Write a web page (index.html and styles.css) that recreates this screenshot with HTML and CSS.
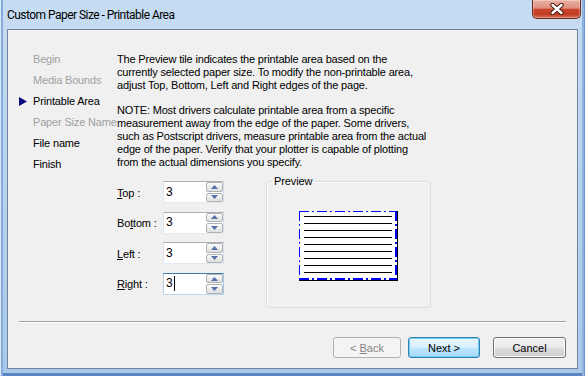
FILE: index.html
```html
<!DOCTYPE html>
<html lang="en">
<head>
<meta charset="utf-8">
<title>Custom Paper Size - Printable Area</title>
<link rel="stylesheet" href="styles.css">
</head>
<body>
<div class="window">
  <header class="titlebar">
    <span class="title">Custom Paper Size - Printable Area</span>
    <button class="close" aria-label="Close">
      <svg width="14" height="12" viewBox="0 0 14 12">
        <path d="M2.5 2 L11.5 10 M11.5 2 L2.5 10" stroke="#4a1a12" stroke-width="4.4" stroke-linecap="round"/>
        <path d="M2.5 2 L11.5 10 M11.5 2 L2.5 10" stroke="#ffffff" stroke-width="2.4" stroke-linecap="round"/>
      </svg>
    </button>
  </header>
  <main class="client">
    <div class="wizard">
      <ul class="steps">
        <li class="step disabled"><span class="marker"></span>Begin</li>
        <li class="step disabled"><span class="marker"></span>Media Bounds</li>
        <li class="step current"><span class="marker"><svg width="8" height="9" viewBox="0 0 8 9"><polygon points="0,0 8,4.5 0,9" fill="#0a0a80"/></svg></span>Printable Area</li>
        <li class="step disabled"><span class="marker"></span>Paper Size Name</li>
        <li class="step"><span class="marker"></span>File name</li>
        <li class="step"><span class="marker"></span>Finish</li>
      </ul>
      <section class="page">
        <p>The Preview tile indicates the printable area based on the<br>currently selected paper size. To modify the non-printable area,<br>adjust Top, Bottom, Left and Right edges of the page.</p>
        <p>NOTE: Most drivers calculate printable area from a specific<br>measurement away from the edge of the paper. Some drivers,<br>such as Postscript drivers, measure printable area from the actual<br>edge of the paper. Verify that your plotter is capable of plotting<br>from the actual dimensions you specify.</p>
        <div class="edit-area">
          <div class="fields">
            <div class="field-row">
              <label class="field-label"><u>T</u>op :</label>
              <div class="spin">
                <span class="spin-value">3</span>
                <span class="spin-buttons">
                  <span class="spin-btn"><svg width="7" height="4" viewBox="0 0 7 4"><polygon points="0,4 7,4 3.5,0" fill="#5470a8"/></svg></span>
                  <span class="spin-btn"><svg width="7" height="4" viewBox="0 0 7 4"><polygon points="0,0 7,0 3.5,4" fill="#5470a8"/></svg></span>
                </span>
              </div>
            </div>
            <div class="field-row">
              <label class="field-label">Bo<u>t</u>tom :</label>
              <div class="spin">
                <span class="spin-value">3</span>
                <span class="spin-buttons">
                  <span class="spin-btn"><svg width="7" height="4" viewBox="0 0 7 4"><polygon points="0,4 7,4 3.5,0" fill="#5470a8"/></svg></span>
                  <span class="spin-btn"><svg width="7" height="4" viewBox="0 0 7 4"><polygon points="0,0 7,0 3.5,4" fill="#5470a8"/></svg></span>
                </span>
              </div>
            </div>
            <div class="field-row">
              <label class="field-label"><u>L</u>eft :</label>
              <div class="spin">
                <span class="spin-value">3</span>
                <span class="spin-buttons">
                  <span class="spin-btn"><svg width="7" height="4" viewBox="0 0 7 4"><polygon points="0,4 7,4 3.5,0" fill="#5470a8"/></svg></span>
                  <span class="spin-btn"><svg width="7" height="4" viewBox="0 0 7 4"><polygon points="0,0 7,0 3.5,4" fill="#5470a8"/></svg></span>
                </span>
              </div>
            </div>
            <div class="field-row">
              <label class="field-label"><u>R</u>ight :</label>
              <div class="spin focus">
                <span class="spin-value">3<span class="caret"></span></span>
                <span class="spin-buttons">
                  <span class="spin-btn"><svg width="7" height="4" viewBox="0 0 7 4"><polygon points="0,4 7,4 3.5,0" fill="#5470a8"/></svg></span>
                  <span class="spin-btn"><svg width="7" height="4" viewBox="0 0 7 4"><polygon points="0,0 7,0 3.5,4" fill="#5470a8"/></svg></span>
                </span>
              </div>
            </div>
          </div>
          <fieldset class="preview">
            <legend>Preview</legend>
            <div class="preview-body">
              <svg class="paper" width="100" height="71" viewBox="0 0 100 71" shape-rendering="crispEdges">
                <rect x="0" y="0" width="98" height="69" fill="#ffffff"/>
                <g fill="#000000">
                  <rect x="5" y="5" width="88" height="1"/>
                  <rect x="5" y="12" width="88" height="1"/>
                  <rect x="5" y="19" width="88" height="1"/>
                  <rect x="5" y="26" width="88" height="1"/>
                  <rect x="5" y="33" width="88" height="1"/>
                  <rect x="5" y="40" width="88" height="1"/>
                  <rect x="5" y="47" width="88" height="1"/>
                  <rect x="5" y="54" width="88" height="1"/>
                  <rect x="5" y="61" width="88" height="1"/>
                  <rect x="98" y="0" width="1" height="70"/>
                  <rect x="0" y="69" width="99" height="1"/>
                </g>
                <g stroke="#0000ff" fill="none" stroke-dasharray="10 3 2 3">
                  <line x1="0" y1="0.5" x2="98" y2="0.5" stroke-width="1"/>
                  <line x1="0.5" y1="0" x2="0.5" y2="69" stroke-width="1"/>
                  <line x1="97" y1="0" x2="97" y2="69" stroke-width="2"/>
                  <line x1="0" y1="68" x2="98" y2="68" stroke-width="2"/>
                </g>
              </svg>
            </div>
          </fieldset>
        </div>
      </section>
    </div>
    <div class="separator"></div>
    <div class="buttons">
      <button class="btn back" disabled>&lt; <u>B</u>ack</button>
      <button class="btn default">Next &gt;</button>
      <button class="btn cancel">Cancel</button>
    </div>
  </main>
</div>
</body>
</html>
```

FILE: styles.css
```css
* {
  box-sizing: border-box;
}

html,
body {
  margin: 0;
  padding: 0;
}

body {
  width: 585px;
  height: 376px;
  overflow: hidden;
  font-family: "Liberation Sans", Arial, sans-serif;
  font-size: 11px;
  color: #000;
}

.window {
  width: 585px;
  height: 376px;
  display: flex;
  flex-direction: column;
  background: linear-gradient(180deg, #c6dcf2 0%, #b9d4ef 45%, #aac9ea 100%);
  box-shadow:
    inset 1px 0 #dbe8f6,
    inset 3px 0 #86abdb,
    inset -1px 0 #6d95cd,
    inset -3px 0 #8fb3df,
    inset 0 -3px #5c86c6;
}

.titlebar {
  height: 29px;
  display: flex;
  align-items: flex-start;
  flex: none;
}

.title {
  margin: 8px 0 0 7px;
  font-family: Roboto, "Liberation Sans", sans-serif;
  font-size: 12px;
  line-height: 14px;
  letter-spacing: -0.54px;
  color: #000;
}

.close {
  margin: 0 4px 0 auto;
  width: 49px;
  height: 19px;
  padding: 0;
  border: 1px solid #6b2a1e;
  border-top: none;
  border-radius: 0 0 5px 5px;
  background: linear-gradient(180deg, #eab0a3 0%, #de8e7d 45%, #c9462e 52%, #c23a20 78%, #d6705a 100%);
  box-shadow: inset 0 0 0 1px rgba(255, 255, 255, 0.3);
  display: flex;
  align-items: center;
  justify-content: center;
}

.close svg {
  display: block;
}

.client {
  flex: 1;
  margin: 0 7px 7px 7px;
  border: 1px solid #71839c;
  background: #f0f0f0;
  display: flex;
  flex-direction: column;
}

.wizard {
  flex: 1;
  display: flex;
  align-items: flex-start;
}

.steps {
  list-style: none;
  margin: 19px 0 0 0;
  padding: 0 0 0 11px;
  width: 109px;
  flex: none;
}

.step {
  display: flex;
  align-items: center;
  height: 21px;
  line-height: 21px;
  white-space: nowrap;
  letter-spacing: -0.17px;
}

.step.disabled {
  color: #a0a0a0;
}

.marker {
  width: 14px;
  flex: none;
  display: flex;
  align-items: center;
}

.marker svg {
  display: block;
}

.page {
  margin-top: 23px;
  flex: 1;
}

.page p {
  margin: 0;
  line-height: 13px;
  letter-spacing: -0.17px;
  white-space: nowrap;
}

.page p + p {
  margin-top: 12px;
}

.edit-area {
  display: flex;
  align-items: flex-start;
  margin-top: 12px;
}

.fields {
  display: flex;
  flex-direction: column;
  gap: 8.6px;
}

.field-row {
  display: flex;
  align-items: center;
  height: 22px;
}

.field-label {
  width: 46px;
  line-height: 22px;
  padding-top: 1px;
  letter-spacing: -0.17px;
}

.spin {
  display: flex;
  width: 61px;
  height: 22px;
  background: #fff;
  border: 1px solid;
  border-color: #abadb3 #dbdfe6 #e3e9ef #e2e3ea;
}

.spin.focus {
  border-color: #3d7bad #a4c9e3 #b7d9ed #b5cfe7;
}

.spin-value {
  flex: 1;
  padding-left: 2px;
  line-height: 19px;
  font-size: 12px;
  display: flex;
  align-items: center;
}

.caret {
  display: inline-block;
  width: 1px;
  height: 15px;
  background: #000;
  margin-left: 1px;
}

.spin-buttons {
  width: 17px;
  display: flex;
  flex-direction: column;
  gap: 1px;
}

.spin-btn {
  flex: 1;
  border: 1px solid #aeb1b6;
  border-radius: 2px;
  background: linear-gradient(180deg, #fbfbfb 0%, #ececec 50%, #e0e0e0 100%);
  display: flex;
  align-items: center;
  justify-content: center;
}

.spin-btn svg {
  display: block;
}

.preview {
  margin: -6px 0 0 42px;
  padding: 0;
  width: 165px;
  min-width: 0;
  border: 1px solid #d5dfe5;
  border-radius: 3px;
  box-shadow: inset 1px 1px 0 #fafcfd;
}

.preview legend {
  margin-left: 5px;
  padding: 0 2px;
  line-height: 13px;
  font-size: 11px;
  letter-spacing: -0.1px;
}

.preview-body {
  height: 119px;
  padding-top: 23px;
  display: flex;
  justify-content: center;
  align-items: flex-start;
}

.paper {
  display: block;
}

.separator {
  margin: 0 11px;
  height: 2px;
  border-top: 1px solid #a0a0a0;
  border-bottom: 1px solid #ffffff;
  flex: none;
}

.buttons {
  display: flex;
  justify-content: flex-end;
  margin-top: 14px;
  padding: 0 11px 10px 0;
  flex: none;
}

.btn {
  height: 21px;
  width: 72px;
  padding: 0;
  font-family: "Liberation Sans", Arial, sans-serif;
  font-size: 11px;
  color: #000;
  border: 1px solid #707070;
  border-radius: 3px;
  background: linear-gradient(180deg, #f2f2f2 0%, #ebebeb 48%, #dddddd 52%, #cfcfcf 100%);
  box-shadow: inset 0 0 0 1px #fbfbfb;
}

.btn.back {
  width: 68px;
  margin-right: 7px;
  color: #838383;
  border-color: #adb2b5;
  background: #f4f4f4;
  box-shadow: none;
}

.btn.default {
  margin-right: 13px;
  border-color: #3c7fb1;
  background: linear-gradient(180deg, #eaf6fd 0%, #d9f0fc 48%, #bee6fd 52%, #a7d9f5 100%);
  box-shadow: inset 0 0 0 1px #66d1f5;
}

.btn.cancel {
  width: 73px;
}
```
